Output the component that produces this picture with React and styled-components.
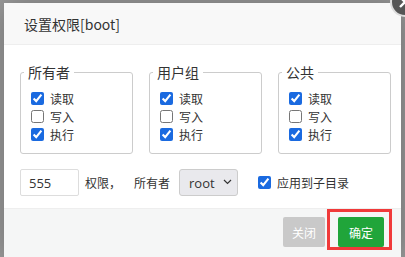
import styled, { createGlobalStyle } from 'styled-components';

const Global = createGlobalStyle`
    html, body {
        margin: 0;
        padding: 0;
        background: #9b9b9b;
        overflow: hidden;
        font-family: "Noto Sans CJK SC", "Open Sans", sans-serif;
        color: #333;
    }
`;

const Dialog = styled.div`
    position: relative;
    margin: 3px 0 0 4px;
    width: 397px;
    height: 254px;
    display: flex;
    flex-direction: column;
    background: #fff;
    box-shadow: 1px 1px 30px rgba(0, 0, 0, 0.3);
`;

const Close = styled.span`
    position: absolute;
    top: -16px;
    right: -19px;
    width: 26px;
    height: 26px;
    border-radius: 50%;
    background: #555;
    border: 2px solid #ddd;
    display: flex;
    align-items: center;
    justify-content: center;
`;

const Header = styled.div`
    height: 41px;
    flex: none;
    background: #f8f8f8;
    border-bottom: 1px solid #eee;
    display: flex;
    align-items: center;
    padding-left: 20px;
    font-size: 14px;
`;

const Body = styled.div`
    padding: 19px 10px 12px 16px;
    border-bottom: 1px solid #eee;
`;

const Groups = styled.div`
    display: grid;
    grid-template-columns: repeat(3, 113px);
    gap: 16px;
`;

const Group = styled.fieldset`
    margin: 0;
    padding: 9px 10px 10px;
    border: 1px solid #ccc;
    border-radius: 3px;
    min-width: 0;
`;

const Legend = styled.legend`
    padding: 0 4px;
    margin-left: -7px;
    font-size: 14px;
    line-height: 16px;
`;

const Check = styled.label`
    display: flex;
    align-items: center;
    gap: 6px;
    height: 18px;
    font-size: 12px;
`;

const Box = styled.input.attrs({ type: 'checkbox' })`
    margin: 0;
    width: 13px;
    height: 13px;
    accent-color: #1a6ae0;
`;

const Row = styled.div`
    display: flex;
    align-items: center;
    margin-top: 15px;
    font-size: 12px;
`;

const Num = styled.input`
    box-sizing: border-box;
    width: 59px;
    height: 27px;
    border: 1px solid #ddd;
    border-radius: 2px;
    padding: 0 0 0 8px;
    font: 13px "Open Sans", sans-serif;
    color: #333;
`;

const Text = styled.span`
    margin-left: ${(p) => p.$gap}px;
`;

const SelectWrap = styled.span`
    position: relative;
    margin-left: 9px;
    display: flex;
`;

const Select = styled.select`
    appearance: none;
    box-sizing: border-box;
    width: 59px;
    height: 27px;
    border: 1px solid #ccc;
    border-radius: 3px;
    background: #e9e9ed;
    padding: 0 0 0 9px;
    font: 13px "Open Sans", sans-serif;
    color: #333;
`;

const Chevron = styled.svg`
    position: absolute;
    right: 6px;
    top: 10px;
    pointer-events: none;
`;

const Sub = styled.label`
    display: flex;
    align-items: center;
    gap: 6px;
    margin-left: 20px;
`;

const Footer = styled.div`
    flex: 1;
    background: #f5f6f6;
    display: flex;
    align-items: flex-start;
    justify-content: flex-end;
    gap: 13px;
    padding: 8px 17px 0 0;
`;

const Button = styled.button`
    height: 30px;
    padding: 0 ${(p) => (p.$primary ? 11 : 9)}px;
    border: none;
    border-radius: 2px;
    background: ${(p) => (p.$primary ? '#20a53a' : '#c9c9c9')};
    color: #fff;
    font: 12px "Noto Sans CJK SC", sans-serif;
`;

const Marked = styled.span`
    position: relative;
    display: flex;
`;

const Mark = styled.span`
    position: absolute;
    left: -11px;
    right: -8px;
    top: -8px;
    bottom: -3px;
    border: 3px solid #f03a3a;
    pointer-events: none;
`;

const groups = ['所有者', '用户组', '公共'];
const perms = [
    ['读取', true],
    ['写入', false],
    ['执行', true],
];

export default function App() {
    return (
        <>
            <Global />
            <Dialog>
                <Close>
                    <svg width="14" height="14" viewBox="0 0 14 14">
                        <path d="M2 2L12 12M12 2L2 12" stroke="#fff" strokeWidth="2.4" />
                    </svg>
                </Close>
                <Header>设置权限[boot]</Header>
                <Body>
                    <Groups>
                        {groups.map((g) => (
                            <Group key={g}>
                                <Legend>{g}</Legend>
                                {perms.map(([name, on]) => (
                                    <Check key={name}>
                                        <Box defaultChecked={on} />
                                        {name}
                                    </Check>
                                ))}
                            </Group>
                        ))}
                    </Groups>
                    <Row>
                        <Num defaultValue="555" />
                        <Text $gap={6}>权限，</Text>
                        <Text $gap={13}>所有者</Text>
                        <SelectWrap>
                            <Select defaultValue="root">
                                <option value="root">root</option>
                            </Select>
                            <Chevron width="9" height="6" viewBox="0 0 9 6">
                                <path d="M1 1L4.5 4.5L8 1" fill="none" stroke="#333" strokeWidth="1.2" />
                            </Chevron>
                        </SelectWrap>
                        <Sub>
                            <Box defaultChecked />
                            应用到子目录
                        </Sub>
                    </Row>
                </Body>
                <Footer>
                    <Button>关闭</Button>
                    <Marked>
                        <Button $primary>确定</Button>
                        <Mark />
                    </Marked>
                </Footer>
            </Dialog>
        </>
    );
}
